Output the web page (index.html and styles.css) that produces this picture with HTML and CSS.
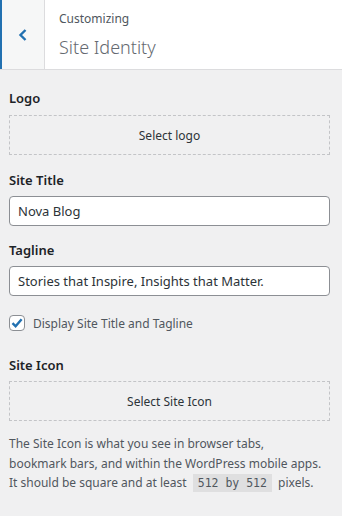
FILE: index.html
```html
<!DOCTYPE html>
<html lang="en">
<head>
  <meta charset="UTF-8">
  <title>Site Identity</title>
  <link rel="stylesheet" href="styles.css">
</head>
<body>
  <div class="panel-head">
    <button class="back" aria-label="Back">
      <svg width="12" height="14" viewBox="0 0 12 14"><path d="M8.5 2 L3.5 7 L8.5 12" fill="none" stroke="#2271b1" stroke-width="2.4"/></svg>
    </button>
    <div class="titles">
      <span class="action">Customizing</span>
      <h3>Site Identity</h3>
    </div>
  </div>

  <div class="controls">
    <div class="control logo">
      <label class="title">Logo</label>
      <button class="upload">Select logo</button>
    </div>

    <div class="control">
      <label class="title">Site Title</label>
      <input type="text" value="Nova Blog">
    </div>

    <div class="control">
      <label class="title">Tagline</label>
      <input type="text" value="Stories that Inspire, Insights that Matter.">
    </div>

    <div class="control check">
      <span class="box">
        <svg width="14" height="14" viewBox="0 0 14 14"><path d="M2.5 7.2 L5.6 10.3 L11.6 3.2" fill="none" stroke="#2271b1" stroke-width="2.4"/></svg>
      </span>
      <span>Display Site Title and Tagline</span>
    </div>

    <div class="control">
      <label class="title">Site Icon</label>
      <button class="upload">Select Site Icon</button>
      <p class="desc">The Site Icon is what you see in browser tabs,<br>bookmark bars, and within the WordPress mobile apps.<br>It should be square and at least <code>512 by 512</code> pixels.</p>
    </div>
  </div>
</body>
</html>
```

FILE: styles.css
```css
body {
  margin: 0;
  background: #f0f0f1;
  font-family: "Noto Sans", "Open Sans", sans-serif;
  font-size: 12px;
  color: #50575e;
}
.panel-head {
  display: flex;
  height: 69px;
  background: #fff;
  border-bottom: 1px solid #dcdcde;
}
.back {
  width: 45px;
  border: none;
  border-left: 2px solid #2271b1;
  border-right: 1px solid #dcdcde;
  background: #f6f7f7;
  display: flex;
  align-items: center;
  justify-content: center;
  padding: 0;
}
.titles {
  padding: 10px 0 0 14px;
}
.action {
  display: block;
  font-size: 12px;
  color: #50575e;
  line-height: 18px;
}
.titles h3 {
  margin: 6px 0 0;
  font-size: 18px;
  font-weight: 300;
  color: #646970;
  line-height: 26px;
}
.controls {
  padding: 18px 12px 0 9px;
}
.control {
  margin-bottom: 14px;
}
.logo {
  margin-bottom: 15px;
}
.title {
  display: block;
  font-size: 13px;
  font-weight: 600;
  color: #1d2327;
  line-height: 20px;
  margin-bottom: 6px;
}
.logo .title {
  margin-bottom: 7px;
}
.upload {
  display: block;
  width: 100%;
  height: 40px;
  border: 1px dashed #c3c4c7;
  background: transparent;
  font-family: inherit;
  font-size: 12px;
  color: #2c3338;
  border-radius: 0;
}
input {
  display: block;
  width: 100%;
  box-sizing: border-box;
  height: 30px;
  border: 1px solid #8c8f94;
  border-radius: 4px;
  padding: 0 8px;
  font-family: inherit;
  font-size: 13px;
  color: #2c3338;
  background: #fff;
}
.check {
  display: flex;
  align-items: center;
  gap: 8px;
  height: 20px;
  margin: 17px 0 22px;
}
.check .box {
  width: 14px;
  height: 14px;
  border: 1px solid #8c8f94;
  border-radius: 4px;
  background: #fff;
  display: flex;
  align-items: center;
  justify-content: center;
}
.desc {
  margin: 13px 0 0;
  line-height: 19.5px;
  font-size: 12px;
  color: #50575e;
}
code {
  font-family: "DejaVu Sans Mono", monospace;
  font-size: 11.5px;
  background: rgba(0, 0, 0, 0.07);
  padding: 2px 5px;
  margin: 0 3px;
}
```
